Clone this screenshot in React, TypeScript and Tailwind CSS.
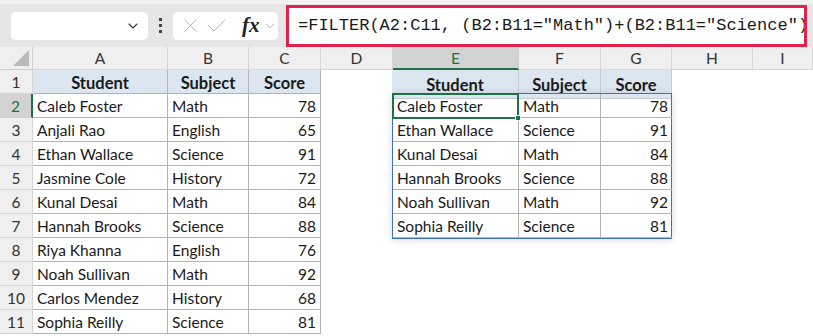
import { X, Check, ChevronDown } from 'lucide-react';

const left = [
    ['Caleb Foster', 'Math', 78],
    ['Anjali Rao', 'English', 65],
    ['Ethan Wallace', 'Science', 91],
    ['Jasmine Cole', 'History', 72],
    ['Kunal Desai', 'Math', 84],
    ['Hannah Brooks', 'Science', 88],
    ['Riya Khanna', 'English', 76],
    ['Noah Sullivan', 'Math', 92],
    ['Carlos Mendez', 'History', 68],
    ['Sophia Reilly', 'Science', 81],
] as const;

const right = left.filter((r) => r[1] === 'Math' || r[1] === 'Science');

const cols = ['A', 'B', 'C', 'D', 'E', 'F', 'G', 'H', 'I'];

export default function App() {
    return (
        <div className="w-[813px] h-[336px] overflow-hidden bg-white text-[#1a1a1a] font-['Lato','Noto_Sans',sans-serif]">
            {/* Toolbar */}
            <div className="h-[47px] bg-[#e6e6e6] border-t-4 border-[#f1f1f1] flex items-center pl-[11px] pr-[6px] gap-[8px]">
                <div className="w-[137px] h-[28px] bg-white rounded-[5px] flex items-center justify-end pr-[7px]">
                    <ChevronDown size={16} strokeWidth={1.6} className="text-[#333]" />
                </div>
                <div className="flex flex-col gap-[3px] mx-[3px]">
                    <span className="w-[3px] h-[3px] bg-[#444]" />
                    <span className="w-[3px] h-[3px] bg-[#444]" />
                    <span className="w-[3px] h-[3px] bg-[#444]" />
                </div>
                <div className="w-[105px] h-[28px] bg-white rounded-[5px] flex items-center pl-[6px] gap-[3px]">
                    <X size={23} strokeWidth={1} className="text-[#b5b5b5]" />
                    <Check size={24} strokeWidth={1} className="text-[#b5b5b5]" />
                    <span className="ml-[10px] font-['Liberation_Serif',serif] italic font-semibold text-[21px] leading-none text-[#222]">fx</span>
                    <ChevronDown size={14} strokeWidth={1.4} className="text-[#999]" />
                </div>
                <div className="flex-1 h-[42px] border-[3px] border-[#e3224c] bg-white overflow-hidden flex items-center pl-[9px]">
                    <span className="whitespace-nowrap font-['Liberation_Mono',monospace] text-[17px] text-[#1a1a1a]">
                        =FILTER(A2:C11, (B2:B11="Math")+(B2:B11="Science"))
                    </span>
                </div>
            </div>

            {/* Sheet grid */}
            <div className="grid grid-cols-[33px_135px_81px_72px_72px_126px_82px_71px_81px_1fr] grid-rows-[23px_repeat(11,24px)] text-[15.5px]">
                {/* corner */}
                <div className="bg-[#efefef] border-r border-b border-[#cfcfcf] relative">
                    <span className="absolute right-[3px] bottom-[3px] w-0 h-0 border-l-[16px] border-l-transparent border-b-[16px] border-b-[#b9b9b9]" />
                </div>
                {cols.map((c) => (
                    <div
                        key={c}
                        className={
                            c === 'E'
                                ? 'bg-[#d3d3d3] border-r border-[#cfcfcf] border-b-2 border-b-[#1e7145] text-[#1e7145] flex items-center justify-center pt-[2px]'
                                : 'bg-[#efefef] border-r border-b border-[#d5d5d5] text-[#333] flex items-center justify-center pt-[2px]'
                        }
                    >
                        {c}
                    </div>
                ))}

                {/* row numbers */}
                {Array.from({ length: 11 }, (_, i) => (
                    <div
                        key={i}
                        style={{ gridRow: i + 2, gridColumn: 1 }}
                        className={
                            i === 1
                                ? 'bg-[#d3d3d3] border-b border-[#cfcfcf] border-r-2 border-r-[#1e7145] text-[#1e7145] flex items-center justify-center pt-[3px]'
                                : 'bg-[#efefef] border-b border-r border-[#d5d5d5] text-[#333] flex items-center justify-center pt-[3px]'
                        }
                    >
                        {i + 1}
                    </div>
                ))}

                {/* Source table A1:C11 */}
                <div className="col-start-2 col-span-3 row-start-2 row-span-11 grid grid-cols-[135px_81px_72px] grid-rows-[repeat(11,24px)]">
                    {['Student', 'Subject', 'Score'].map((h) => (
                        <div key={h} className="bg-[#dce6f1] border-r border-b border-[#b4b4b4] font-bold text-[16.5px] flex items-center justify-center pt-[3px]">
                            {h}
                        </div>
                    ))}
                    {left.map((r) => (
                        <>
                            <div key={r[0]} className="border-r border-b border-[#b4b4b4] flex items-center pl-[4px] pt-[3px]">{r[0]}</div>
                            <div key={r[0] + 's'} className="border-r border-b border-[#b4b4b4] flex items-center pl-[4px] pt-[3px]">{r[1]}</div>
                            <div key={r[0] + 'n'} className="border-r border-b border-[#b4b4b4] flex items-center justify-end pr-[4px] pt-[3px]">{r[2]}</div>
                        </>
                    ))}
                </div>

                {/* Spilled table E1:G7 */}
                <div className="col-start-6 col-span-3 row-start-2 row-span-7 flex flex-col -ml-px">
                    <div className="h-[24px] grid grid-cols-[127px_82px_71px]">
                        {['Student', 'Subject', 'Score'].map((h) => (
                            <div key={h} className="bg-[#dce6f1] border-r border-b border-[#c6cdd6] font-bold text-[16.5px] flex items-center justify-center pt-[3px]">
                                {h}
                            </div>
                        ))}
                    </div>
                    <div className="grid grid-cols-[126px_82px_71px] grid-rows-[repeat(6,24px)] border border-[#3f6fc6] shadow-[0_1px_8px_rgba(0,0,0,0.14)] -mt-px">
                        {right.map((r, i) => (
                            <>
                                <div
                                    key={r[0]}
                                    className={
                                        i === 0
                                            ? 'relative border-2 border-[#1e7145] flex items-center pl-[3px] pt-[2px] -mt-px -ml-px -mb-px'
                                            : 'border-r border-b border-[#b4b4b4] flex items-center pl-[4px] pt-[3px]'
                                    }
                                >
                                    {r[0]}
                                    {i === 0 && (
                                        <span className="absolute -right-[4px] -bottom-[4px] w-[6px] h-[6px] bg-[#1e7145] border border-white" />
                                    )}
                                </div>
                                <div key={r[0] + 's'} className="border-r border-b border-[#b4b4b4] flex items-center pl-[4px] pt-[3px]">{r[1]}</div>
                                <div key={r[0] + 'n'} className="border-b border-[#b4b4b4] flex items-center justify-end pr-[4px] pt-[3px]">{r[2]}</div>
                            </>
                        ))}
                    </div>
                </div>
            </div>
        </div>
    );
}
